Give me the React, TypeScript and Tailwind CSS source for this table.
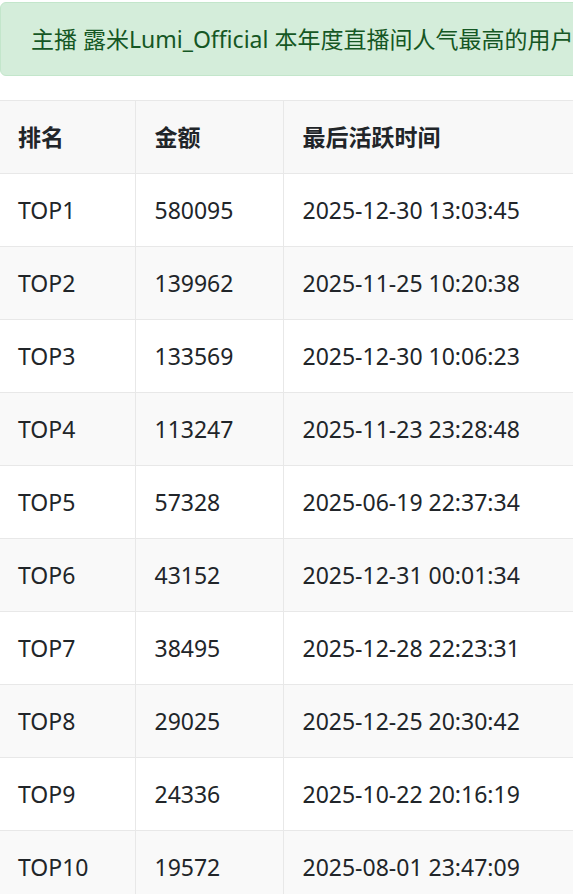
const rows = [
  { rank: 'TOP1', amount: '580095', time: '2025-12-30 13:03:45' },
  { rank: 'TOP2', amount: '139962', time: '2025-11-25 10:20:38' },
  { rank: 'TOP3', amount: '133569', time: '2025-12-30 10:06:23' },
  { rank: 'TOP4', amount: '113247', time: '2025-11-23 23:28:48' },
  { rank: 'TOP5', amount: '57328', time: '2025-06-19 22:37:34' },
  { rank: 'TOP6', amount: '43152', time: '2025-12-31 00:01:34' },
  { rank: 'TOP7', amount: '38495', time: '2025-12-28 22:23:31' },
  { rank: 'TOP8', amount: '29025', time: '2025-12-25 20:30:42' },
  { rank: 'TOP9', amount: '24336', time: '2025-10-22 20:16:19' },
  { rank: 'TOP10', amount: '19572', time: '2025-08-01 23:47:09' },
]

const App = () => {
  return (
    <div
      className="w-[573px] h-[894px] overflow-hidden bg-white text-[#212529]"
      style={{ fontFamily: '"Noto Sans", "Noto Sans CJK SC", sans-serif' }}
    >
      <div className="w-[900px]">
        <div className="mt-[2px] h-[74px] flex items-center pl-[30px] rounded-md border border-[#c3e6cb] bg-[#d4edda] text-[#155724] text-[23px] whitespace-nowrap">
          主播 露米Lumi_Official 本年度直播间人气最高的用户排行榜
        </div>

        <table className="mt-[24px] w-full border-collapse text-[23px]">
          <thead>
            <tr className="bg-[#f8f8f8]">
              <th className="h-[73px] w-[135px] border-t border-b border-r border-[#e8e8e8] pl-[18px] text-left font-bold">
                排名
              </th>
              <th className="h-[73px] w-[148px] border-t border-b border-r border-[#e8e8e8] pl-[19px] text-left font-bold">
                金额
              </th>
              <th className="h-[73px] border-t border-b border-[#e8e8e8] pl-[19px] text-left font-bold">
                最后活跃时间
              </th>
            </tr>
          </thead>
          <tbody>
            {rows.map((r, i) => (
              <tr key={r.rank} className={i % 2 === 1 ? 'bg-[#f9f9f9]' : 'bg-white'}>
                <td className="h-[73px] border-b border-r border-[#e8e8e8] pl-[18px]">{r.rank}</td>
                <td className="h-[73px] border-b border-r border-[#e8e8e8] pl-[19px]">{r.amount}</td>
                <td className="h-[73px] border-b border-[#e8e8e8] pl-[19px]">{r.time}</td>
              </tr>
            ))}
          </tbody>
        </table>
      </div>
    </div>
  )
}

export default App
